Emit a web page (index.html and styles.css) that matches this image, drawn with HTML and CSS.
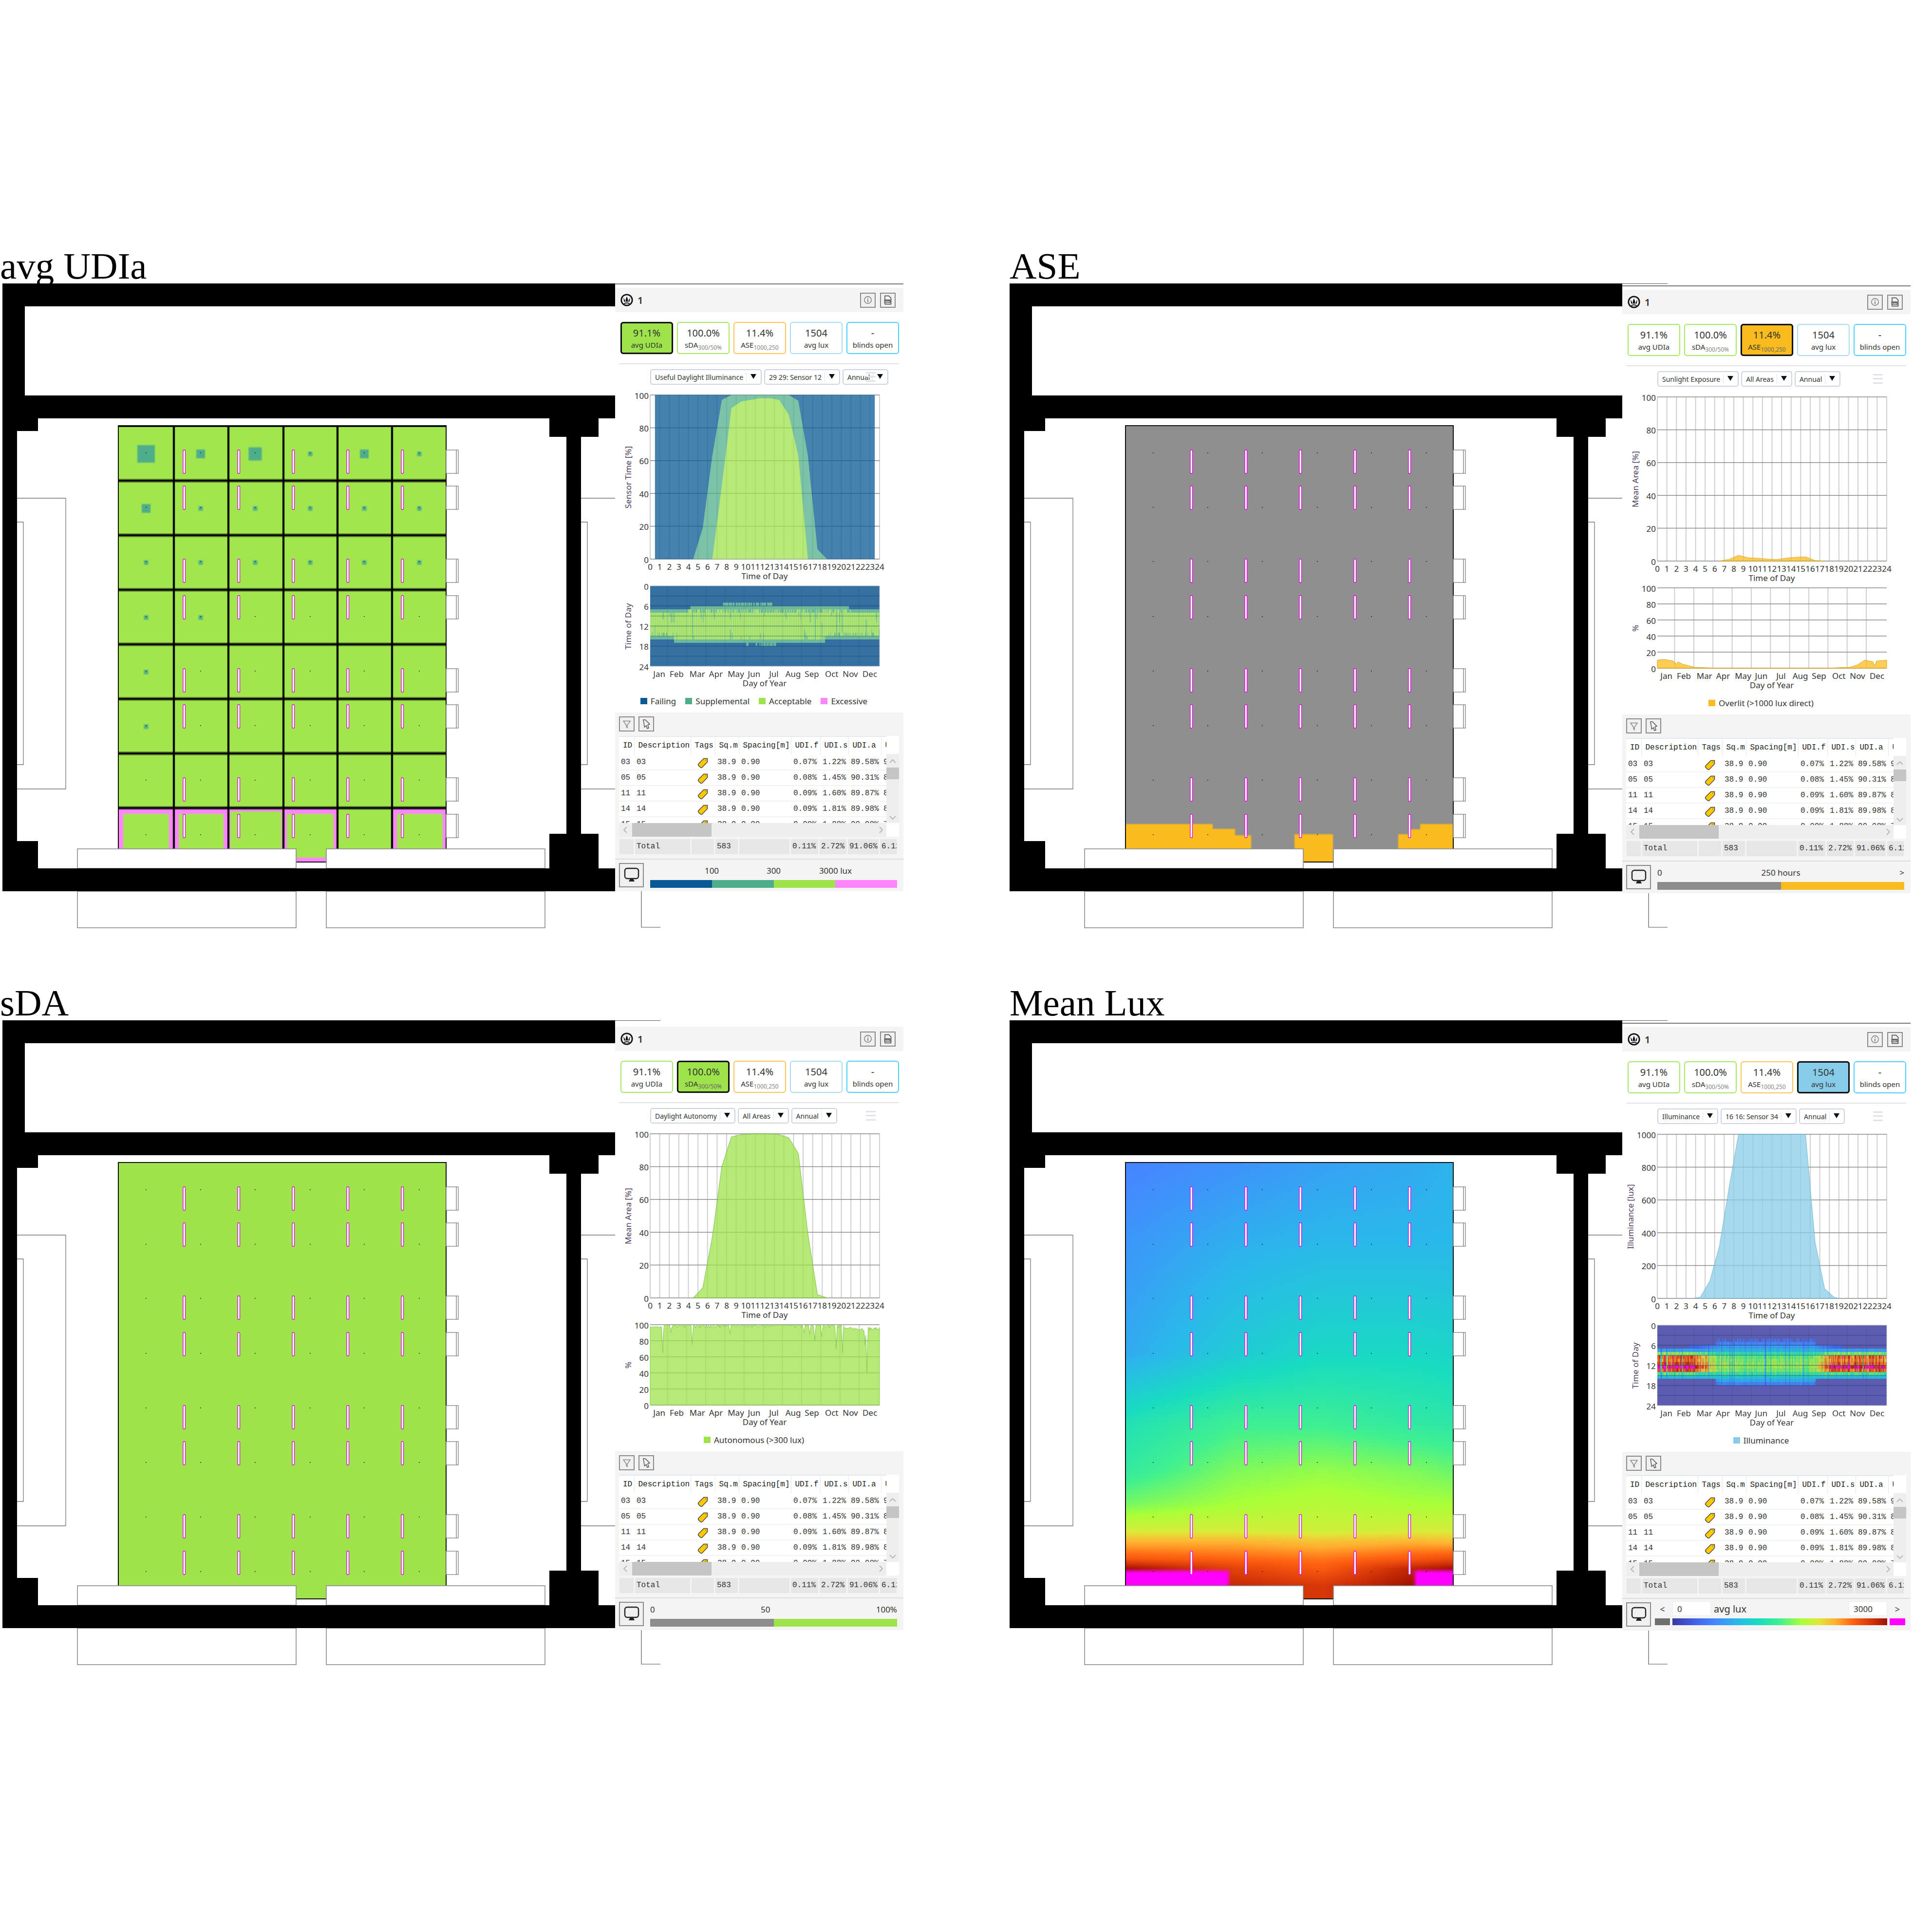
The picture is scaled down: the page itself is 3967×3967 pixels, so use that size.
FILE: index.html
```html
<!DOCTYPE html>
<html lang="en">

<head>
    <meta charset="UTF-8">
    <title>Daylight metrics</title>
    <link rel="stylesheet" href="styles.css">
</head>

<body>
    <main class="sheet">
        <section class="study">
            <h2>avg UDIa</h2>
            <div class="stage" id="udia"></div>
        </section>
        <section class="study right">
            <h2>ASE</h2>
            <div class="stage" id="ase"></div>
        </section>
        <section class="study">
            <h2>sDA</h2>
            <div class="stage" id="sda"></div>
        </section>
        <section class="study right">
            <h2>Mean Lux</h2>
            <div class="stage" id="lux"></div>
        </section>
    </main>
    <script src="script.js"></script>
</body>

</html>
```
FILE: styles.css
```css
body {
    margin: 0;
    background: #fff;
}

.sheet {
    display: grid;
    grid-template-columns: 2068px 1899px;
    grid-auto-rows: 1513px;
    padding-top: 510px;
}

.study h2 {
    margin: 0;
    font: normal 77px/72px "Liberation Serif", serif;
    color: #000;
}

.study.right h2 { padding-left: 5px; }

.stage {
    position: relative;
    width: 1899px;
    height: 1330px;
}

.plan {
    display: block;
    width: 1899px;
    height: 1330px;
}

.wall { fill: #000; }
.thin { fill: none; stroke: #777; stroke-width: 1.3; }
.ink { fill: none; stroke: #555; stroke-width: 1.2; }
.glass { fill: #fff; stroke: #8a8a8a; stroke-width: 1.6; }
.box { fill: #fff; stroke: #777; stroke-width: 1.2; }
.lamp { fill: #fff; stroke: #e000e0; stroke-width: 1.3; }
.dot { fill: #111; }
.soft { filter: blur(1.3px); }
.edge { fill: none; stroke: #111; stroke-width: 2; }
.grid-halo { stroke: #000; stroke-opacity: .4; stroke-width: 8; }
.grid-halo.upright { stroke-width: 5; }
.grid-line { stroke: #000; stroke-width: 3.6; }

/* side panel */
.dash {
    position: absolute;
    left: 1263px;
    top: 0;
    width: 592px;
    height: 1248px;
    box-sizing: border-box;
    padding-top: 9px;
    background: #fff;
    color: #333;
    font-family: "Noto Sans", "Open Sans", sans-serif;
}

.dash.ruled { border-top: 2px solid #777; padding-top: 7px; }
.dash.low { top: 4px; }
.dash.lower { top: 5px; }

.dash-head {
    display: flex;
    align-items: center;
    gap: 9px;
    height: 50px;
    padding: 0 16px 0 11px;
    background: #f4f4f4;
    font-size: 20px;
    font-weight: 600;
}

.dash-head .spacer { flex: 1; }

.tool {
    display: flex;
    align-items: center;
    justify-content: center;
    width: 32px;
    height: 31px;
    box-sizing: border-box;
    border: 2px solid #8a8a8a;
    background: #f0f0f0;
}

.kpis {
    display: flex;
    gap: 8px;
    margin: 20px 0 0 11px;
}

.kpi {
    width: 108px;
    height: 66px;
    box-sizing: border-box;
    border: 2px solid;
    border-radius: 6px;
    text-align: center;
    padding-top: 7px;
}

.kpi b { display: block; font-size: 20px; font-weight: 400; line-height: 27px; }
.kpi span { display: block; font-size: 15px; line-height: 22px; white-space: nowrap; }
.kpi sub { font-size: 12px; color: #888; line-height: 0; }

.kpi.green { border-color: #a6e85a; }
.kpi.orange { border-color: #fcc452; }
.kpi.sky { border-color: #a9dcf3; }
.kpi.cyan { border-color: #4dcfff; }
.kpi.on { border: 3px solid #111; box-shadow: 0 0 1px #111; padding-top: 6px; }
.kpi.on.green { background: #9ee34b; }
.kpi.on.orange { background: #f9bb1d; }
.kpi.on.sky { background: #87cde9; }
.kpi.on sub { color: #6a6a6a; }

.rule {
    height: 2px;
    margin: 19px 9px 0 8px;
    background: #e4e4e4;
}

.selects {
    position: relative;
    display: flex;
    gap: 5px;
    height: 32px;
    margin: 10px 0 0 72px;
}

.select {
    display: flex;
    align-items: center;
    box-sizing: border-box;
    height: 32px;
    padding-left: 8px;
    border: 2px solid #cdd2e0;
    border-radius: 5px;
    font-size: 14px;
    white-space: nowrap;
}

.select i {
    display: block;
    width: 29px;
    height: 20px;
    margin-left: 6px;
    border-left: 1px solid #e2e2e2;
    position: relative;
}

.select i:after {
    content: "";
    position: absolute;
    left: 8px;
    top: 4px;
    border: 6px solid transparent;
    border-top: 10px solid #111;
    border-bottom: 0;
}

.burger {
    position: absolute;
    left: 443px;
    top: 6px;
    width: 20px;
    height: 3px;
    background: #e0e3ea;
    box-shadow: 0 8px 0 #e0e3ea, 0 17px 0 #e0e3ea;
}

.chart { display: block; width: 592px; }
.chart-a { height: 406px; }
.chart-b { height: 219px; }
.chart text { font-size: 17px; fill: #333; dominant-baseline: central; }
.chart .ytitle { fill: #4b3b5c; }
.chart .mid { text-anchor: middle; }
.chart .end { text-anchor: end; }
.vgrid { stroke: #cfcfcf; stroke-width: 2; fill: none; }
.hgrid { stroke: #8a8a8a; stroke-width: 1.5; }
.heat-h { stroke: #0f3a60; stroke-width: 1.3; stroke-opacity: .45; }
.heat-v { stroke: #0f3a60; stroke-width: 1; stroke-opacity: .2; fill: none; }
.heat-frame { stroke: #bdbdbd; stroke-width: 1; fill: none; }
.heat { display: block; }

.legend {
    display: flex;
    align-items: center;
    justify-content: center;
    gap: 19px;
    height: 48px;
    padding-right: 22px;
    font-size: 17px;
}

.legend span { display: flex; align-items: center; gap: 7px; }
.legend i { display: block; width: 14px; height: 13px; }

.c-fail { background: #075a95; }
.c-supp { background: #4fae8a; }
.c-good { background: #9ee34b; }
.c-over { background: #ff85ff; }
.c-orange { background: #f9bb1d; }
.c-sky { background: #87cde9; }
.c-gray { background: #8c8c8c; }
.c-dim { background: #6e6e6e; }
.c-hot { background: #ff00ff; }

/* table block */
.tools {
    height: 367px;
    background: #f4f4f4;
}

.tool-row {
    display: flex;
    gap: 8px;
    padding: 8px 0 0 8px;
}

.grid {
    display: grid;
    grid-template-columns: 549px 26px;
    grid-template-rows: 179px 28px;
    margin: 9px 0 0 8px;
    width: 575px;
    background: #fff;
}

.view { overflow: hidden; }

.view table {
    width: 598px;
    table-layout: fixed;
    border-collapse: collapse;
    font: 16px "Liberation Mono", monospace;
    color: #333;
}

.view col:nth-child(1) { width: 31px; }
.view col:nth-child(2) { width: 116px; }
.view col:nth-child(3) { width: 50px; }
.view col:nth-child(4) { width: 49px; }
.view col:nth-child(5) { width: 107px; }
.view col:nth-child(6) { width: 60px; }
.view col:nth-child(7) { width: 58px; }
.view col:nth-child(8) { width: 67px; }
.view col:nth-child(9) { width: 60px; }

.view th,
.view td {
    overflow: hidden;
    white-space: nowrap;
    text-align: left;
    padding: 0 0 0 5px;
}

.view th {
    height: 37px;
    box-sizing: border-box;
    padding-left: 8px;
    font-weight: normal;
    border-top: 2px solid #e3e7ee;
    border-right: 1px solid #e3e7ee;
    color: #222;
}

.view td { height: 32px; box-sizing: border-box; border-bottom: 2px solid #f2f2f2; }
.view td.tag { padding: 4px 0 0 14px; line-height: 0; }
.view td:first-child { padding-left: 4px; }

.vbar {
    position: relative;
    margin-top: 37px;
    background: #eee;
    display: flex;
    flex-direction: column;
    align-items: center;
    justify-content: space-between;
    padding: 10px 0 6px;
    height: 126px;
}

.vbar:after {
    content: "";
    position: absolute;
    left: 0;
    right: 0;
    top: 28px;
    height: 24px;
    background: #c5c5c5;
}

.hbar {
    position: relative;
    background: #eee;
    display: flex;
    align-items: center;
    justify-content: space-between;
    padding: 0 6px 0 8px;
}

.hbar:after {
    content: "";
    position: absolute;
    left: 27px;
    top: 0;
    bottom: 0;
    width: 163px;
    background: #c5c5c5;
}

.totals {
    display: flex;
    gap: 3px;
    height: 31px;
    margin: 5px 0 0 9px;
    font: 16px/31px "Liberation Mono", monospace;
    color: #333;
}

.totals span {
    display: block;
    box-sizing: border-box;
    padding-left: 3px;
    overflow: hidden;
    white-space: nowrap;
    background: #e6e6e6;
}

.totals span:nth-child(1) { width: 29px; }
.totals span:nth-child(2) { width: 113px; }
.totals span:nth-child(3) { width: 46px; }
.totals span:nth-child(4) { width: 46px; }
.totals span:nth-child(5) { width: 103px; }
.totals span:nth-child(6) { width: 56px; }
.totals span:nth-child(7) { width: 55px; }
.totals span:nth-child(8) { width: 63px; }
.totals span:nth-child(9) { width: 34px; }

.tools-rule {
    height: 2px;
    margin-top: 9px;
    background: #ddd;
}

.scale-row {
    display: flex;
    gap: 13px;
    padding: 7px 0 0 8px;
}

.tool.big { width: 51px; height: 50px; }

.scale { width: 507px; font-size: 17px; color: #333; }
.scale-text { display: flex; justify-content: space-between; height: 35px; line-height: 32px; }
.scale-text.centered { justify-content: flex-start; margin-left: 63px; }
.scale-text.centered span { width: 127px; text-align: center; }
.bar { display: flex; height: 16px; }
.bar i { display: block; flex: 1; }

.scale-row.wide { gap: 8px; }

.lux-scale {
    display: grid;
    grid-template-columns: 31px 441px 32px;
    grid-template-rows: 30px 14px;
    column-gap: 5px;
    row-gap: 5px;
    margin-top: -2px;
}

.lux-scale em { font-style: normal; text-align: center; line-height: 32px; font-size: 18px; }
.lux-mid { display: flex; align-items: center; }
.lux-mid .field {
    box-sizing: border-box;
    width: 79px;
    height: 30px;
    padding-left: 9px;
    line-height: 30px;
    background: #fff;
    border: 1px solid #ececec;
    font-size: 17px;
}
.lux-mid .name { flex: 1; padding-left: 6px; font-size: 20px; }
.rainbow {
    background: linear-gradient(90deg, #3838a0 0%, #4060e8 10%, #4488ff 20%, #2ab8ea 30%, #18dcc0 40%, #40f090 50%, #a8ff38 60%, #dfe83a 68%, #ffb030 76%, #ff6010 84%, #d83808 92%, #a01000 100%);
}
```
FILE: script.js
```js
// four studies, all drawn from the same templates
let MONTHS = [["Jan", 90.6], ["Feb", 126.5], ["Mar", 168.8], ["Apr", 207], ["May", 248], ["Jun", 285.4], ["Jul", 326], ["Aug", 365.6], ["Sep", 404], ["Oct", 444.7], ["Nov", 483], ["Dec", 523]]
let COLX = [243, 357, 469, 582, 693, 805, 916]
let ROWY = [875, 987, 1099, 1211, 1323, 1435, 1547, 1659]
let LAMPX = [378, 490, 602, 714, 826]
let LAMPY = [924, 998, 1148, 1223, 1373, 1447, 1597, 1672]
let DOTX = [299, 411, 523, 636, 747, 860]
let DOTY = [929, 1041, 1152, 1265, 1377, 1489, 1601, 1713]
let ROWS = [
    ["03", "0.07%", "1.22%", "89.58%", "9.13%"],
    ["05", "0.08%", "1.45%", "90.31%", "8.16%"],
    ["11", "0.09%", "1.60%", "89.87%", "8.44%"],
    ["14", "0.09%", "1.81%", "89.98%", "8.12%"],
    ["15", "0.09%", "1.88%", "90.08%", "7.95%"]
]

let seed = 7
function rnd() {
    seed = (seed * 16807) % 2147483647
    return seed / 2147483647
}

function lerpTable(xs, ys, x) {
    if (x <= xs[0]) return ys[0]
    for (let i = 1; i < xs.length; i++) {
        if (x <= xs[i]) return ys[i - 1] + (ys[i] - ys[i - 1]) * (x - xs[i - 1]) / (xs[i] - xs[i - 1])
    }
    return ys[ys.length - 1]
}

// colour map of the lux scale, t from 0 to 1
let RAMP = [[0, 56, 56, 160], [.1, 64, 96, 232], [.2, 68, 136, 255], [.3, 42, 184, 234], [.4, 24, 220, 192], [.5, 64, 240, 144], [.6, 168, 255, 56], [.68, 223, 232, 58], [.76, 255, 176, 48], [.84, 255, 96, 16], [.92, 216, 56, 8], [1, 160, 16, 0]]
function ramp(t) {
    let ts = RAMP.map(function (r) { return r[0] })
    return [1, 2, 3].map(function (c) {
        return lerpTable(ts, RAMP.map(function (r) { return r[c] }), t)
    })
}

/* floor plan */
function lamps() {
    let out = ""
    LAMPY.forEach(function (y) {
        LAMPX.forEach(function (x) {
            out += `<rect class="lamp" x="${x - 2}" y="${y}" width="4.5" height="48" rx="1"/>`
        })
        out += `<rect class="box" x="916" y="${y}" width="25" height="48"/><path class="thin" d="M937 ${y}V${y + 48}"/>`
    })
    DOTY.forEach(function (y) {
        DOTX.forEach(function (x) {
            out += `<rect class="dot" x="${x}" y="${y}" width="1.6" height="1.6"/>`
        })
    })
    return out
}

function udiFloor() {
    let out = `<rect x="243" y="873" width="673" height="897" fill="#a2e64e"/>`
    // failing patches
    let patches = [[36, 18, 27, 9, 18, 9], [18, 9, 9, 9, 9, 9], [9, 9, 9, 9, 9, 9], [9, 9, 0, 0, 0, 0], [9, 0, 0, 0, 0, 0], [9, 0, 0, 0, 0, 0]]
    patches.forEach(function (row, r) {
        row.forEach(function (size, c) {
            if (size) out += `<rect class="soft" fill="#4fae8a" x="${DOTX[c] + 1 - size / 2}" y="${DOTY[r] + 3 - size / 2}" width="${size}" height="${size}"/>`
        })
    })
    // overlit frames along the window
    let frames = [[10, 10, 10], [10, 10, 10], [4, 4, 5], [7, 8, 10], null, [10, 7, 10]]
    frames.forEach(function (f, c) {
        if (!f) return
        let x = COLX[c], w = COLX[c + 1] - x
        out += `<rect fill="#ff85ff" x="${x}" y="1659" width="${w}" height="111"/>`
        out += `<rect class="soft" fill="#a2e64e" x="${x + f[0]}" y="${1661 + f[2]}" width="${w - f[0] - f[1]}" height="${1761 - 1661 - f[2]}"/>`
    })
    COLX.slice(1, 6).forEach(function (x) {
        out += `<path class="grid-halo upright" d="M${x} 873V1743"/><path class="grid-line" d="M${x} 873V1743"/>`
    })
    ROWY.slice(1).forEach(function (y) {
        out += `<path class="grid-halo" d="M243 ${y}H916"/><path class="grid-line" d="M243 ${y}H916"/>`
    })
    return out + `<path class="grid-line" d="M243 875H916"/>`
}

function aseFloor() {
    return `<rect x="243" y="873" width="673" height="897" fill="#8f8f8f"/>
        <g class="soft" fill="#f9bb1d">
            <path d="M243 1692H422V1702H468V1715H501V1760H243Z"/>
            <path d="M590 1713H669V1770H590Z"/>
            <path d="M803 1713H827V1703H848V1692H916V1760H803Z"/>
        </g>`
}

function planSvg(floor) {
    let glass = ""
    let y = [[1743, 40], [1830, 75]]
    y.forEach(function (p) {
        glass += `<rect class="glass" x="159" y="${p[0]}" width="449" height="${p[1]}"/><rect class="glass" x="670" y="${p[0]}" width="449" height="${p[1]}"/>`
    })
    return `<svg class="plan" viewBox="0 582 1899 1330">
        <path class="thin" d="M35 1023H135V1620H35M35 1072H48V1570H35M1263 1023H1193M1263 1620H1193M1193 1072H1206V1570H1193"/>
        <path class="ink" d="M1263 582.5H1356M1317 1830V1904H1356"/>
        ${floor}
        <path class="edge" d="M243 1743V874H916V1743M608 1770H670"/>
        ${lamps()}
        ${glass}
        <g class="wall">
            <rect x="5" y="582" width="1258" height="47"/>
            <rect x="5" y="629" width="46" height="183"/>
            <rect x="5" y="812" width="1258" height="47"/>
            <rect x="5" y="859" width="30" height="924"/>
            <rect x="35" y="859" width="43" height="26"/>
            <rect x="35" y="1727" width="43" height="56"/>
            <rect x="5" y="1783" width="1258" height="47"/>
            <rect x="1128" y="859" width="101" height="38"/>
            <rect x="1163" y="897" width="30" height="815"/>
            <rect x="1128" y="1712" width="101" height="71"/>
        </g>
    </svg>`
}

/* icons */
let ICON = {
    logo: `<svg width="26" height="26" viewBox="0 0 26 26"><circle cx="13" cy="13" r="11.2" fill="none" stroke="#111" stroke-width="2.8"/><path d="M6 8L9.8 14.5L13 5.5L16.2 14.5L20 8L18.6 16.5H7.4Z" fill="#111"/><path d="M10.2 16V11.5M15.8 16V11.5" stroke="#fff" stroke-width="1"/><path d="M7.5 20.5Q13 17.5 18.5 20.5" fill="none" stroke="#111" stroke-width="2"/></svg>`,
    info: `<svg width="18" height="18" viewBox="0 0 18 18"><circle cx="9" cy="9" r="7.2" fill="none" stroke="#777" stroke-width="1.4"/><path d="M9 8V13.5M9 4.6V6.4" stroke="#777" stroke-width="1.8"/></svg>`,
    csv: `<svg width="18" height="20" viewBox="0 0 18 20"><path d="M3 1.5H11L15.5 6V18.5H3Z" fill="none" stroke="#444" stroke-width="1.5"/><rect x="1.5" y="9" width="13" height="7" fill="#666"/><text x="8" y="15" font-size="6" fill="#fff" text-anchor="middle" font-family="Noto Sans">csv</text></svg>`,
    filter: `<svg width="18" height="18" viewBox="0 0 18 18"><path d="M2 2.5H16L10 11V16.5L8 14.5V11Z" fill="none" stroke="#888" stroke-width="1.5"/></svg>`,
    pick: `<svg width="18" height="22" viewBox="0 0 18 22"><path d="M3 2L7 2L16 11L12 12.5L14 19L11 20L9 14L5.5 17Z" fill="none" stroke="#555" stroke-width="1.5"/></svg>`,
    screen: `<svg width="34" height="34" viewBox="0 0 34 34"><rect x="3" y="3" width="28" height="21" rx="5" fill="none" stroke="#222" stroke-width="2.4"/><path d="M11 30H23L20 24H14Z" fill="#222"/></svg>`,
    tag: `<svg width="22" height="22" viewBox="0 0 22 22"><path d="M13 1.5H20.5V8.5L9.5 20Q7.5 21 6 19.5L2 15.5Q1 13.5 2.5 12Z" fill="#ffc800" stroke="#444" stroke-width="1.5"/><circle cx="17" cy="5" r="1" fill="#777"/></svg>`,
    up: `<svg width="14" height="9" viewBox="0 0 14 9"><path d="M1 8L7 2L13 8" fill="none" stroke="#b4b4b4" stroke-width="1.8"/></svg>`,
    down: `<svg width="14" height="9" viewBox="0 0 14 9"><path d="M1 1L7 7L13 1" fill="none" stroke="#b4b4b4" stroke-width="1.8"/></svg>`,
    left: `<svg width="9" height="14" viewBox="0 0 9 14"><path d="M8 1L2 7L8 13" fill="none" stroke="#b4b4b4" stroke-width="1.8"/></svg>`,
    right: `<svg width="9" height="14" viewBox="0 0 9 14"><path d="M1 1L7 7L1 13" fill="none" stroke="#b4b4b4" stroke-width="1.8"/></svg>`
}

/* charts */
function dayChart(s) {
    let hx = function (h) { return 72 + h * 19.625 }
    let py = function (v) { return 358 - v / s.dayMax * 337 }
    let pts = function (list) { return list.map(function (p) { return hx(p[0]) + "," + py(p[1]) }).join(" ") }
    let out = ""
    for (let h = 0; h <= 24; h++) {
        out += `<path class="vgrid" d="M${hx(h)} 21V358"/><text class="mid" x="${hx(h)}" y="373">${h}</text>`
    }
    for (let i = 0; i <= 5; i++) {
        let v = s.dayMax * i / 5
        out += `<path class="hgrid" d="M72 ${py(v)}H543"/><text class="end" x="69" y="${py(v) + 1}">${v}</text>`
    }
    out += `<g opacity=".75">`
    s.day.forEach(function (layer) {
        out += `<polygon points="${pts(layer[0])}" fill="${layer[1]}" stroke="${layer[2] || "none"}" stroke-width="1.5"/>`
    })
    out += `</g>`
    return `<svg class="chart chart-a" viewBox="0 0 592 406">${out}
        <text class="ytitle mid" transform="translate(${s.dayTitleX || 26} 190) rotate(-90)">${s.dayTitle}</text>
        <text class="mid" x="307" y="392">Time of Day</text></svg>`
}

function yearChart(s) {
    let dx = function (d) { return 72 + d / 365 * 471 }
    let vy = function (v) { return 172 - v / 100 * 165 }
    let out = ""
    let months = ""
    MONTHS.forEach(function (m) { months += `<text class="mid" x="${m[1]}" y="187">${m[0]}</text>` })
    let vlines = ""
    for (let i = 1; i < 12; i++) vlines += `M${dx(30.5 * i - 3)} 7V172`
    if (s.year) {
        out += `<path class="vgrid" d="${vlines}"/>`
        for (let i = 0; i <= 5; i++) {
            out += `<path class="hgrid" d="M72 ${vy(i * 20)}H543"/><text class="end" x="69" y="${vy(i * 20) + 1}">${i * 20}</text>`
        }
        let poly = "72,172 " + s.year.map(function (p) { return dx(p[0]) + "," + vy(p[1]) }).join(" ") + " 543,172"
        out += `<polygon points="${poly}" fill="${s.yearColor}" fill-opacity=".75" stroke="${s.yearStroke}" stroke-width="1"/>`
    } else {
        out += `<foreignObject x="72" y="7" width="471" height="165"><canvas class="heat" data-kind="${s.heat}" width="471" height="165"></canvas></foreignObject>`
        for (let i = 1; i < 8; i++) out += `<path class="heat-h" d="M72 ${7 + i * 20.625}H543"/>`
        out += `<path class="heat-v" d="${vlines}"/><path class="heat-frame" d="M72 7H543V172H72"/>`
        let labels = [0, 6, 12, 18, 24]
        labels.forEach(function (v, i) { out += `<text class="end" x="69" y="${8 + i * 41.25}">${v}</text>` })
    }
    return `<svg class="chart chart-b" viewBox="0 0 592 219">${out}${months}
        <text class="ytitle mid" transform="translate(26 90) rotate(-90)">${s.yearTitle}</text>
        <text class="mid" x="307" y="206">Day of Year</text></svg>`
}

function drawUdiHeat(ctx) {
    let rowH = 165 / 24, colW = 471 / 365
    let supp = "#6fbb9c", good = "#b2e86c", fail = "#3670a3"
    function band(d, from, to, colour) {
        ctx.fillStyle = colour
        ctx.fillRect(d * colW, from * rowH, colW + .4, (to - from) * rowH)
    }
    ctx.fillStyle = fail
    ctx.fillRect(0, 0, 471, 165)
    for (let d = 0; d < 365; d++) {
        let summer = d >= 38 && d < 278
        let supStart = d < 64 || d > 315 ? 7 : 6
        if (d >= 116 && d <= 194 && rnd() < .75) supStart = 5
        let goodStart = d < 58 || d > 320 ? 8 : (rnd() < .45 ? 7 : 8)
        let goodEnd = summer ? 16 : (rnd() < .4 ? 14 : 15)
        let supEnd = summer ? 17 : 16
        if (d >= 153 && d <= 200 && rnd() < .5) supEnd = 18
        band(d, supStart, supEnd, supp)
        band(d, goodStart, goodEnd, good)
        if (rnd() < .05) band(d, goodStart, goodStart + 1 + Math.floor(rnd() * 3), supp)
        if (rnd() < .04) band(d, goodEnd - 1 - Math.floor(rnd() * 2), goodEnd, supp)
    }
    let spikes = [[20, 8, 10], [33, 8, 11], [67, 7, 16], [127, 7, 10], [127, 13, 16], [245, 13, 16], [254, 7, 11], [262, 7, 16], [273, 11, 16], [296, 7, 16], [305, 7, 14], [343, 10, 15]]
    spikes.forEach(function (s) {
        band(s[0], s[1], s[2], supp)
    })
}

let WINTER = { 6: .12, 7: .27, 8: .58, 9: .88, 10: .84, 11: .9, 12: 1.05, 13: .9, 14: .52, 15: .35 }
let SUMMER = { 4: .17, 5: .2, 6: .26, 7: .32, 8: .46, 9: .54, 10: .57, 11: .59, 12: .59, 13: .56, 14: .48, 15: .38, 16: .3, 17: .2 }

function drawLuxHeat(ctx) {
    let rowH = 165 / 24, colW = 471 / 365
    ctx.fillStyle = "#5c5cb0"
    ctx.fillRect(0, 0, 471, 165)
    for (let d = 0; d < 365; d++) {
        let w = (1 + Math.cos(2 * Math.PI * (d - 172) / 365)) / 2
        let season = Math.max(0, Math.min(1, (w - .35) / .3))
        let day = .85 + rnd() * .25
        if (rnd() < .05) day = .5
        for (let h = 4; h < 18; h++) {
            let a = WINTER[h] || 0, b = SUMMER[h] || 0
            if (h == 4 || h == 5 || h == 17 || h == 16) {
                if (w < .6 || (h == 4 && rnd() < .6)) continue
            }
            if (h == 6 && w < .25) continue
            let t = (a + (b - a) * season) * (day + (rnd() - .5) * .16)
            let c = t >= 1 ? [255, 0, 255] : ramp(t)
            ctx.fillStyle = `rgba(${c[0]},${c[1]},${c[2]},.85)`
            ctx.fillRect(d * colW, h * rowH, colW + .4, rowH)
        }
    }
}

// value table of the colour field on the floor, read row by row
let FIELD_Y = [0, 246, 586, 796, 946, 1046, 1126, 1166, 1216, 1246, 1298]
let FIELD_X = [0, .33, .6, .88, 1]
let FIELD = [
    [.19, .22, .25, .27, .29],
    [.23, .28, .3, .3, .3],
    [.27, .35, .39, .39, .38],
    [.42, .49, .49, .46, .45],
    [.47, .56, .58, .56, .54],
    [.55, .6, .62, .6, .6],
    [.66, .66, .65, .66, .66],
    [.76, .76, .74, .76, .75],
    [.86, .84, .82, .86, .88],
    [1, .9, .85, .96, 1],
    [1, .95, .92, 1, 1]
]

function drawField(ctx, w, h) {
    let img = ctx.createImageData(w, h)
    for (let y = 0; y < h; y++) {
        let zy = y * 1.493
        let row = FIELD_X.map(function (_, c) {
            return lerpTable(FIELD_Y, FIELD.map(function (r) { return r[c] }), zy)
        })
        for (let x = 0; x < w; x++) {
            let c = ramp(lerpTable(FIELD_X, row, x / w))
            let i = (y * w + x) * 4
            img.data[i] = c[0]
            img.data[i + 1] = c[1]
            img.data[i + 2] = c[2]
            img.data[i + 3] = 255
        }
    }
    ctx.putImageData(img, 0, 0)
    ctx.filter = "blur(3px)"
    ctx.fillStyle = "#ff00ff"
    ctx.fillRect(-10, 839, 222, 100)
    ctx.fillRect(594, 839, 100, 100)
    ctx.filter = "none"
}

/* panel */
function kpiCards(active) {
    let cards = [
        ["91.1%", "avg UDIa", "green"],
        ["100.0%", "sDA<sub>300/50%</sub>", "green"],
        ["11.4%", "ASE<sub>1000,250</sub>", "orange"],
        ["1504", "avg lux", "sky"],
        ["-", "blinds open", "cyan"]
    ]
    return cards.map(function (c, i) {
        return `<div class="kpi ${c[2]}${i == active ? " on" : ""}"><b>${c[0]}</b><span>${c[1]}</span></div>`
    }).join("")
}

function tableHtml() {
    let heads = ["ID", "Description", "Tags", "Sq.m", "Spacing[m]", "UDI.f", "UDI.s", "UDI.a", "UDI.e"]
    let head = heads.map(function (h) { return `<th>${h}</th>` }).join("")
    let body = ROWS.map(function (r) {
        return `<tr><td>${r[0]}</td><td>${r[0]}</td><td class="tag">${ICON.tag}</td><td>38.9</td><td>0.90</td><td>${r[1]}</td><td>${r[2]}</td><td>${r[3]}</td><td>${r[4]}</td></tr>`
    }).join("")
    return `<div class="grid">
        <div class="view"><table><colgroup><col><col><col><col><col><col><col><col><col></colgroup><tr>${head}</tr>${body}</table></div>
        <div class="vbar">${ICON.up}${ICON.down}</div>
        <div class="hbar">${ICON.left}${ICON.right}</div>
        <div></div>
    </div>
    <div class="totals">
        <span></span><span>Total</span><span></span><span>583</span><span></span><span>0.11%</span><span>2.72%</span><span>91.06%</span><span>6.12%</span>
    </div>`
}

function dashHtml(s) {
    let selects = s.selects.map(function (t) { return `<div class="select">${t}<i></i></div>` }).join("")
    let legend = s.legend.map(function (l) { return `<span><i class="${l[0]}"></i>${l[1]}</span>` }).join("")
    return `<div class="dash ${s.dashClass}">
        <div class="dash-head">${ICON.logo}<span>1</span><span class="spacer"></span><div class="tool">${ICON.info}</div><div class="tool">${ICON.csv}</div></div>
        <div class="kpis">${kpiCards(s.active)}</div>
        <div class="rule"></div>
        <div class="selects">${selects}<div class="burger"></div></div>
        ${dayChart(s)}
        ${yearChart(s)}
        <div class="legend">${legend}</div>
        <div class="tools">
            <div class="tool-row"><div class="tool">${ICON.filter}</div><div class="tool">${ICON.pick}</div></div>
            ${tableHtml()}
            <div class="tools-rule"></div>
            <div class="scale-row${s.scaleClass || ""}"><div class="tool big">${ICON.screen}</div>${s.scale}</div>
        </div>
    </div>`
}

let FAIL_RECT = [[.5, 0], [.5, 100], [23.5, 100], [23.5, 0]]
let DIPS = { 20: 65, 33: 90, 67: 75, 127: 88, 245: 90, 254: 88, 262: 80, 273: 85, 296: 70, 306: 65, 342: 75, 345: 40 }
let sdaYear = []
for (let d = 0; d <= 365; d += 1) {
    let base = d < 19 ? 96 + rnd() * 2 : (d > 308 ? 93 + rnd() * 4 : 99.5 - (rnd() < .3 ? rnd() * 4 : 0))
    let v = DIPS[d] || base
    if (DIPS[d - 1]) v = (DIPS[d - 1] + base * 2) / 3
    if (DIPS[d + 1]) v = (DIPS[d + 1] + base) / 2
    sdaYear.push([d, v])
}
let aseYear = [[0, 10], [10, 11], [25, 9], [31, 5], [33, 8], [40, 5], [50, 3], [60, 1], [90, .3], [100, 0], [275, 0], [290, .8], [306, 1], [318, 4], [330, 10], [343, 8], [346, 3], [349, 9], [365, 10]]

let STUDIES = {
    udia: {
        active: 0, dashClass: "ruled",
        selects: ["Useful Daylight Illuminance", "29 29: Sensor 12", "Annual"],
        dayMax: 100, dayTitle: "Sensor Time [%]",
        day: [
            [FAIL_RECT, "#075a95"],
            [[[4.5, 0], [5.5, 19], [6.5, 63], [7.5, 97], [8.5, 100], [14.5, 100], [15.5, 96.5], [16.5, 63], [17.5, 6], [18.5, 0]], "#4fae8a"],
            [[[6.5, 0], [7.5, 45], [8.5, 92], [9.5, 96], [11.5, 98], [12.5, 98], [13.5, 97], [14.5, 88], [15.5, 63], [16.5, 0]], "#9ee34b"]
        ],
        heat: "udi", yearTitle: "Time of Day",
        legend: [["c-fail", "Failing"], ["c-supp", "Supplemental"], ["c-good", "Acceptable"], ["c-over", "Excessive"]],
        scale: `<div class="scale"><div class="scale-text centered"><span>100</span><span>300</span><span>3000 lux</span></div><div class="bar"><i class="c-fail"></i><i class="c-supp"></i><i class="c-good"></i><i class="c-over"></i></div></div>`,
        floor: udiFloor()
    },
    ase: {
        active: 2, dashClass: "ruled low",
        selects: ["Sunlight Exposure", "All Areas", "Annual"],
        dayMax: 100, dayTitle: "Mean Area [%]",
        day: [[[[6.5, 0], [7.5, 1], [8.5, 3.5], [9.5, 2], [10.5, 1.7], [11.5, 1.2], [12.5, 1], [13.5, 1.8], [14.5, 2.3], [15.5, 2.5], [16.5, .3], [17.5, 0]], "#f9bb1d", "#e0a818"]],
        year: aseYear, yearColor: "#f9bb1d", yearStroke: "#e0a818", yearTitle: "%",
        legend: [["c-orange", "Overlit (&gt;1000 lux direct)"]],
        scale: `<div class="scale"><div class="scale-text"><span>0</span><span>250 hours</span><span>&gt;</span></div><div class="bar"><i class="c-gray"></i><i class="c-orange"></i></div></div>`,
        floor: aseFloor()
    },
    sda: {
        active: 1, dashClass: "low",
        selects: ["Daylight Autonomy", "All Areas", "Annual"],
        dayMax: 100, dayTitle: "Mean Area [%]",
        day: [[[[4.5, 0], [5.5, 6], [6.5, 37], [7.5, 80], [8.5, 98], [9.5, 99.5], [11, 100], [12.5, 100], [13.5, 99.5], [14.5, 97.5], [15.5, 88], [16.5, 39], [17.5, 2], [18.5, 0]], "#9ee34b", "#78c038"]],
        year: sdaYear, yearColor: "#9ee34b", yearStroke: "#86c84a", yearTitle: "%",
        legend: [["c-good", "Autonomous (&gt;300 lux)"]],
        scale: `<div class="scale"><div class="scale-text"><span>0</span><span>50</span><span>100%</span></div><div class="bar"><i class="c-gray"></i><i class="c-good"></i></div></div>`,
        floor: `<rect x="243" y="873" width="673" height="897" fill="#9ee34b"/>`
    },
    lux: {
        active: 3, dashClass: "ruled lower",
        selects: ["Illuminance", "16 16: Sensor 34", "Annual"],
        dayMax: 1000, dayTitle: "Illuminance [lux]", dayTitleX: 16,
        day: [[[[3.8, 0], [4, 3], [4.5, 7], [5.5, 106], [6.5, 318], [7.5, 670], [8.5, 1000], [15.5, 1000], [16.5, 342], [17.5, 59], [18.5, 6], [19, 0]], "#87cde9", "#6fb4d4"]],
        heat: "lux", yearTitle: "Time of Day",
        legend: [["c-sky", "Illuminance"]],
        scaleClass: " wide",
        scale: `<div class="lux-scale"><em>&lt;</em><div class="lux-mid"><span class="field">0</span><span class="name">avg lux</span><span class="field">3000</span></div><em>&gt;</em><i class="c-dim"></i><i class="rainbow"></i><i class="c-hot"></i></div>`,
        floor: `<foreignObject x="243" y="873" width="673" height="897"><canvas class="heat field-map" width="673" height="897"></canvas></foreignObject>`
    }
}

for (let id in STUDIES) {
    let s = STUDIES[id]
    document.getElementById(id).innerHTML = planSvg(s.floor) + dashHtml(s)
}

let heats = document.querySelectorAll("canvas.heat")
for (let i = 0; i < heats.length; i++) {
    let ctx = heats[i].getContext("2d")
    if (heats[i].classList.contains("field-map")) drawField(ctx, heats[i].width, heats[i].height)
    else if (heats[i].dataset.kind == "udi") drawUdiHeat(ctx)
    else drawLuxHeat(ctx)
}
```
